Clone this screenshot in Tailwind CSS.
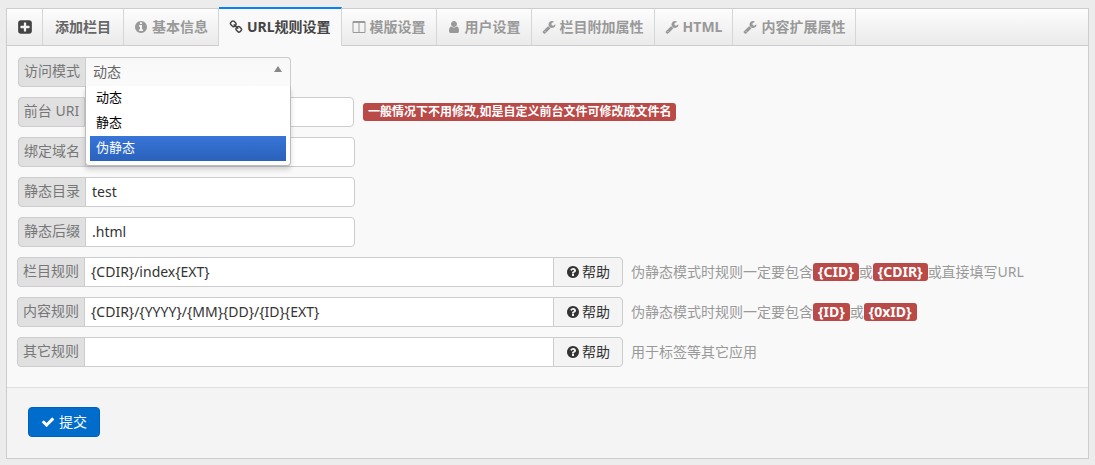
<!DOCTYPE html>
<html lang="zh-CN">
<head>
<meta charset="utf-8">
<title>添加栏目</title>
<script src="https://cdn.jsdelivr.net/npm/@tailwindcss/browser@4"></script>
</head>
<body class="min-h-screen bg-[#ececec] px-[6px] pt-2 pb-[6px] font-['Noto_Sans','Noto_Sans_CJK_SC',sans-serif] text-sm leading-5 text-[#333]">
<svg class="hidden" aria-hidden="true">
  <symbol id="plus" viewBox="0 0 1792 1792"><path d="M1408 960v-128q0-26-19-45t-45-19h-320v-320q0-26-19-45t-45-19h-128q-26 0-45 19t-19 45v320h-320q-26 0-45 19t-19 45v128q0 26 19 45t45 19h320v320q0 26 19 45t45 19h128q26 0 45-19t19-45v-320h320q26 0 45-19t19-45zm256-544v960q0 119-84.500 203.500t-203.500 84.500h-960q-119 0-203.500-84.500t-84.500-203.500v-960q0-119 84.500-203.500t203.500-84.500h960q119 0 203.500 84.500t84.500 203.500z"/></symbol>
  <symbol id="info" viewBox="0 0 1792 1792"><path d="M1152 1376v-160q0-14-9-23t-23-9h-96v-512q0-14-9-23t-23-9h-320q-14 0-23 9t-9 23v160q0 14 9 23t23 9h96v320h-96q-14 0-23 9t-9 23v160q0 14 9 23t23 9h448q14 0 23-9t9-23zm-128-896v-160q0-14-9-23t-23-9h-192q-14 0-23 9t-9 23v160q0 14 9 23t23 9h192q14 0 23-9t9-23zm640 416q0 209-103 385.500t-279.500 279.500-385.500 103-385.500-103-279.500-279.500-103-385.500 103-385.500 279.500-279.500 385.500-103 385.500 103 279.500 279.500 103 385.500z"/></symbol>
  <symbol id="link" viewBox="0 0 1792 1792"><path d="M1520 1216q0-40-28-68l-208-208q-28-28-68-28-42 0-72 32 3 3 19 18.500t21.500 21.500 15 19 13 25.500 3.500 27.500q0 40-28 68t-68 28q-15 0-27.500-3.500t-25.500-13-19-15-21.500-21.500-18.500-19q-33 31-33 73 0 40 28 68l206 207q27 27 68 27 40 0 68-26l147-146q28-28 28-67zm-703-705q0-40-28-68l-206-207q-28-28-68-28-39 0-68 27l-147 146q-28 28-28 67 0 40 28 68l208 208q27 27 68 27 42 0 72-31-3-3-19-18.500t-21.500-21.500-15-19-13-25.500-3.500-27.500q0-40 28-68t68-28q15 0 27.500 3.500t25.500 13 19 15 21.500 21.500 18.500 19q33-31 33-73zm895 705q0 120-85 203l-147 146q-83 83-203 83-121 0-204-85l-206-207q-83-83-83-203 0-123 88-209l-88-88q-86 88-208 88-120 0-204-84l-208-208q-84-84-84-204t85-203l147-146q83-83 203-83 121 0 204 85l206 207q83 83 83 203 0 123-88 209l88 88q86-88 208-88 120 0 204 84l208 208q84 84 84 204z"/></symbol>
  <symbol id="columns" viewBox="0 0 1792 1792"><path d="M224 1536h608v-1152h-640v1120q0 13 9.500 22.500t22.500 9.500zm1376-32v-1120h-640v1152h608q13 0 22.500-9.500t9.500-22.500zm128-1216v1216q0 66-47 113t-113 47h-1344q-66 0-113-47t-47-113v-1216q0-66 47-113t113-47h1344q66 0 113 47t47 113z"/></symbol>
  <symbol id="user" viewBox="0 0 1792 1792"><path d="M1536 1399q0 109-62.500 187t-150.500 78h-854q-88 0-150.500-78t-62.500-187q0-85 8.500-160.500t31.500-152 58.500-131 94-89 134.500-34.500q131 128 313 128t313-128q76 0 134.500 34.500t94 89 58.500 131 31.500 152 8.500 160.500zm-256-887q0 159-112.500 271.500t-271.500 112.500-271.500-112.500-112.500-271.500 112.500-271.500 271.500-112.500 271.500 112.500 112.500 271.500z"/></symbol>
  <symbol id="wrench" viewBox="0 0 1792 1792"><path d="M448 1472q0-26-19-45t-45-19-45 19-19 45 19 45 45 19 45-19 19-45zm644-420l-682 682q-37 37-90 37-52 0-91-37l-106-108q-38-36-38-90 0-53 38-91l681-681q39 98 114.500 173.500t173.500 114.500zm634-435q0 39-23 106-47 134-164.500 217.500t-258.500 83.500q-185 0-316.500-131.500t-131.500-316.500 131.500-316.500 316.500-131.500q58 0 121.500 16.500t107.500 46.500q16 11 16 28t-16 28l-293 169v224l193 107q5-3 79-48.500t135.500-81 70.500-35.500q15 0 23.500 10t8.500 25z"/></symbol>
  <symbol id="question" viewBox="0 0 1792 1792"><path d="M1024 1376v-192q0-14-9-23t-23-9h-192q-14 0-23 9t-9 23v192q0 14 9 23t23 9h192q14 0 23-9t9-23zm256-672q0-88-55.500-163t-138.500-116-170-41q-243 0-371 213-15 24 8 42l132 100q7 6 19 6 16 0 25-12 53-68 86-92 34-24 86-24 48 0 85.500 26t37.500 59q0 38-20 61t-68 45q-63 28-115.500 86.500t-52.500 125.500v36q0 14 9 23t23 9h192q14 0 23-9t9-23q0-19 21.500-49.500t54.500-49.500q32-18 49-28.500t46-35 44.500-48 28-60.500 12.500-81zm384 192q0 209-103 385.500t-279.500 279.500-385.500 103-385.500-103-279.500-279.500-103-385.500 103-385.500 279.500-279.500 385.500-103 385.500 103 279.500 279.500 103 385.500z"/></symbol>
  <symbol id="check" viewBox="0 0 1792 1792"><path d="M1671 566q0 40-28 68l-724 724-136 136q-28 28-68 28t-68-28l-136-136-362-362q-28-28-28-68t28-68l136-136q28-28 68-28t68 28l294 295 656-657q28-28 68-28t68 28l136 136q28 28 28 68z"/></symbol>
</svg>
<main class="border border-[#cdcdcd] bg-[#f9f9f9]">
  <header class="flex h-[37px] border-b border-[#cdcdcd] bg-linear-to-b from-[#fdfdfd] to-[#eaeaea] font-bold text-[#999]">
    <span class="flex w-9 items-center justify-center border-r border-[#d6d6d6] text-[#444]"><svg class="size-4 fill-current"><use href="#plus"/></svg></span>
    <h1 class="flex items-center border-r border-[#d6d6d6] px-3 text-[#666]">添加栏目</h1>
    <nav class="flex">
      <a href="#base" class="flex items-center gap-1 border-r border-[#d6d6d6] px-[10px]"><svg class="size-[14px] fill-current"><use href="#info"/></svg>基本信息</a>
      <a href="#url" aria-current="page" class="-mt-[2px] -mb-px flex items-center gap-1 border-t-2 border-r border-t-[#0a80f5] border-r-[#d6d6d6] bg-[#f9f9f9] px-[10px] pb-px text-[#444]"><svg class="size-[14px] fill-current"><use href="#link"/></svg>URL规则设置</a>
      <a href="#template" class="flex items-center gap-1 border-r border-[#d6d6d6] px-[10px]"><svg class="size-[14px] fill-current"><use href="#columns"/></svg>模版设置</a>
      <a href="#user-settings" class="flex items-center gap-1 border-r border-[#d6d6d6] px-[10px]"><svg class="size-[14px] fill-current"><use href="#user"/></svg>用户设置</a>
      <a href="#attributes" class="flex items-center gap-1 border-r border-[#d6d6d6] px-[10px]"><svg class="size-[14px] fill-current"><use href="#wrench"/></svg>栏目附加属性</a>
      <a href="#html" class="flex items-center gap-1 border-r border-[#d6d6d6] px-[10px]"><svg class="size-[14px] fill-current"><use href="#wrench"/></svg>HTML</a>
      <a href="#extended" class="flex items-center gap-1 border-r border-[#d6d6d6] px-[10px]"><svg class="size-[14px] fill-current"><use href="#wrench"/></svg>内容扩展属性</a>
    </nav>
  </header>
  <form>
    <div class="flex flex-col gap-[10px] px-[11px] pt-[11px] pb-5">
      <div class="flex">
        <label for="mode" class="h-[30px] w-[68px] rounded-l border border-[#ccc] bg-[#e0e0e0] pt-[3px] text-center whitespace-nowrap text-[#777]">访问模式</label>
        <div class="relative -ml-px w-[206px]">
          <select id="mode" class="h-[30px] w-full appearance-none rounded-tr border border-b-0 border-[#ccc] bg-linear-to-b from-[#f8f8f8] to-[#fbfbfb] px-[7px] pb-[2px] text-[#666]"><option>动态</option><option>静态</option><option>伪静态</option></select>
          <svg class="pointer-events-none absolute top-[9px] right-[9px] h-[6px] w-2 fill-[#888]" viewBox="0 0 8 6"><path d="M4 0 8 6H0z"/></svg>
          <ul role="listbox" aria-label="访问模式" class="absolute inset-x-0 top-[29px] z-10 rounded-b border border-t-0 border-[#bbb] bg-white px-1 pb-1 text-[13px] text-black shadow-[0_4px_5px_rgba(0,0,0,0.15)]">
            <li role="option" class="h-[25px] px-[6px] pt-px">动态</li>
            <li role="option" class="h-[25px] px-[6px] pt-px">静态</li>
            <li role="option" aria-selected="true" class="h-[25px] bg-linear-to-b from-[#3875d7] to-[#2a62bc] px-[6px] pt-px text-white">伪静态</li>
          </ul>
        </div>
      </div>
      <div class="flex items-center">
        <label for="uri" class="h-[30px] w-[67px] rounded-l border border-[#ccc] bg-[#e0e0e0] pt-[3px] text-center whitespace-nowrap text-[#777]">前台 URI</label>
        <input id="uri" class="-ml-px h-[30px] w-[270px] rounded-r border border-[#ccc] bg-white px-[6px] pb-[2px]">
        <span class="ml-[9px] rounded-[3px] bg-[#b94a48] px-[5px] text-xs leading-[18px] font-bold text-white">一般情况下不用修改,如是自定义前台文件可修改成文件名</span>
      </div>
      <div class="flex">
        <label for="domain" class="h-[30px] w-[68px] rounded-l border border-[#ccc] bg-[#e0e0e0] pt-[3px] text-center whitespace-nowrap text-[#777]">绑定域名</label>
        <input id="domain" class="-ml-px h-[30px] w-[270px] rounded-r border border-[#ccc] bg-white px-[6px] pb-[2px]">
      </div>
      <div class="flex">
        <label for="dir" class="h-[30px] w-[68px] rounded-l border border-[#ccc] bg-[#e0e0e0] pt-[3px] text-center whitespace-nowrap text-[#777]">静态目录</label>
        <input id="dir" value="test" class="-ml-px h-[30px] w-[270px] rounded-r border border-[#ccc] bg-white px-[6px] pb-[2px]">
      </div>
      <div class="flex">
        <label for="ext" class="h-[30px] w-[68px] rounded-l border border-[#ccc] bg-[#e0e0e0] pt-[3px] text-center whitespace-nowrap text-[#777]">静态后缀</label>
        <input id="ext" value=".html" class="-ml-px h-[30px] w-[270px] rounded-r border border-[#ccc] bg-white px-[6px] pb-[2px]">
      </div>
      <div class="-ml-px flex items-center">
        <label for="category" class="h-[30px] w-[68px] rounded-l border border-[#ccc] bg-[#e0e0e0] pt-[3px] text-center whitespace-nowrap text-[#777]">栏目规则</label>
        <input id="category" value="{CDIR}/index{EXT}" class="-ml-px h-[30px] w-[470px] border border-[#ccc] bg-white px-[6px] pb-[2px]">
        <button type="button" class="-ml-px flex h-[30px] w-[70px] items-center justify-center gap-[2px] rounded-r border border-[#ccc] bg-[#f4f4f4]"><svg class="size-[14px] fill-current"><use href="#question"/></svg>帮助</button>
        <p class="ml-2 flex items-center text-[#999]">伪静态模式时规则一定要包含<b class="rounded-[3px] bg-[#b94a48] px-[5px] leading-[18px] text-white">{CID}</b>或<b class="rounded-[3px] bg-[#b94a48] px-[5px] leading-[18px] text-white">{CDIR}</b>或直接填写URL</p>
      </div>
      <div class="-ml-px flex items-center">
        <label for="content" class="h-[30px] w-[68px] rounded-l border border-[#ccc] bg-[#e0e0e0] pt-[3px] text-center whitespace-nowrap text-[#777]">内容规则</label>
        <input id="content" value="{CDIR}/{YYYY}/{MM}{DD}/{ID}{EXT}" class="-ml-px h-[30px] w-[470px] border border-[#ccc] bg-white px-[6px] pb-[2px]">
        <button type="button" class="-ml-px flex h-[30px] w-[70px] items-center justify-center gap-[2px] rounded-r border border-[#ccc] bg-[#f4f4f4]"><svg class="size-[14px] fill-current"><use href="#question"/></svg>帮助</button>
        <p class="ml-2 flex items-center text-[#999]">伪静态模式时规则一定要包含<b class="rounded-[3px] bg-[#b94a48] px-[5px] leading-[18px] text-white">{ID}</b>或<b class="rounded-[3px] bg-[#b94a48] px-[5px] leading-[18px] text-white">{0xID}</b></p>
      </div>
      <div class="-ml-px flex items-center">
        <label for="other" class="h-[30px] w-[68px] rounded-l border border-[#ccc] bg-[#e0e0e0] pt-[3px] text-center whitespace-nowrap text-[#777]">其它规则</label>
        <input id="other" class="-ml-px h-[30px] w-[470px] border border-[#ccc] bg-white px-[6px] pb-[2px]">
        <button type="button" class="-ml-px flex h-[30px] w-[70px] items-center justify-center gap-[2px] rounded-r border border-[#ccc] bg-[#f4f4f4]"><svg class="size-[14px] fill-current"><use href="#question"/></svg>帮助</button>
        <p class="ml-2 text-[#999]">用于标签等其它应用</p>
      </div>
    </div>
    <footer class="border-t border-[#e0e0e0] bg-[#f4f4f4] px-[21px] pt-[19px] pb-[21px]">
      <button type="submit" class="flex h-[30px] items-center gap-1 rounded border border-[#0060b8] bg-[#006dcc] px-3 text-white"><svg class="size-[14px] fill-current"><use href="#check"/></svg>提交</button>
    </footer>
  </form>
</main>
</body>
</html>
